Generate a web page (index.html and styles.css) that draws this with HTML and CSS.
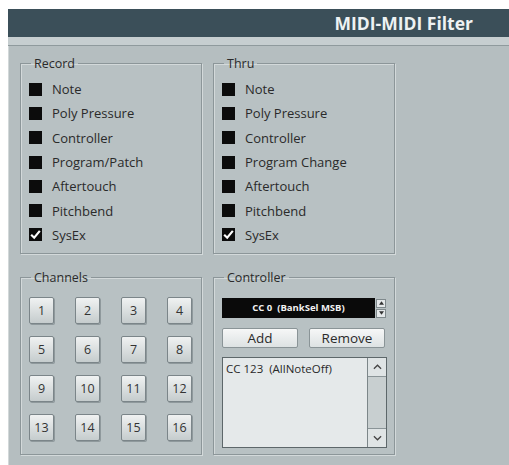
FILE: index.html
```html
<!DOCTYPE html>
<html lang="en">
<head>
  <meta charset="UTF-8">
  <title>MIDI-MIDI Filter</title>
  <link rel="stylesheet" href="styles.css">
</head>
<body>
  <div class="window">
    <div class="titlebar">MIDI-MIDI Filter</div>
    <div class="strip"></div>

    <div class="groups">
      <!-- Record filter -->
      <fieldset class="group">
        <legend>Record</legend>
        <div class="check-list">
          <div class="check-row"><span class="box"></span>Note</div>
          <div class="check-row"><span class="box"></span>Poly Pressure</div>
          <div class="check-row"><span class="box"></span>Controller</div>
          <div class="check-row"><span class="box"></span>Program/Patch</div>
          <div class="check-row"><span class="box"></span>Aftertouch</div>
          <div class="check-row"><span class="box"></span>Pitchbend</div>
          <div class="check-row"><span class="box checked"><svg viewBox="0 0 12 12"><path d="M2 6.2 L4.8 9 L10 2.6" fill="none" stroke="#fff" stroke-width="2"/></svg></span>SysEx</div>
        </div>
      </fieldset>

      <!-- Thru filter -->
      <fieldset class="group">
        <legend>Thru</legend>
        <div class="check-list">
          <div class="check-row"><span class="box"></span>Note</div>
          <div class="check-row"><span class="box"></span>Poly Pressure</div>
          <div class="check-row"><span class="box"></span>Controller</div>
          <div class="check-row"><span class="box"></span>Program Change</div>
          <div class="check-row"><span class="box"></span>Aftertouch</div>
          <div class="check-row"><span class="box"></span>Pitchbend</div>
          <div class="check-row"><span class="box checked"><svg viewBox="0 0 12 12"><path d="M2 6.2 L4.8 9 L10 2.6" fill="none" stroke="#fff" stroke-width="2"/></svg></span>SysEx</div>
        </div>
      </fieldset>

      <!-- Channels -->
      <fieldset class="group">
        <legend>Channels</legend>
        <div class="channels">
          <button class="chan">1</button>
          <button class="chan">2</button>
          <button class="chan">3</button>
          <button class="chan">4</button>
          <button class="chan">5</button>
          <button class="chan">6</button>
          <button class="chan">7</button>
          <button class="chan">8</button>
          <button class="chan">9</button>
          <button class="chan">10</button>
          <button class="chan">11</button>
          <button class="chan">12</button>
          <button class="chan">13</button>
          <button class="chan">14</button>
          <button class="chan">15</button>
          <button class="chan">16</button>
        </div>
      </fieldset>

      <!-- Controller -->
      <fieldset class="group">
        <legend>Controller</legend>
        <div class="cc-select">
          <div class="cc-value">CC 0 &nbsp;(BankSel MSB)</div>
          <div class="spin">
            <span class="spin-btn"><svg viewBox="0 0 6 4"><path d="M0 4 L3 0 L6 4 Z" fill="#333"/></svg></span>
            <span class="spin-btn"><svg viewBox="0 0 6 4"><path d="M0 0 L3 4 L6 0 Z" fill="#333"/></svg></span>
          </div>
        </div>
        <div class="cc-actions">
          <button class="btn">Add</button>
          <button class="btn">Remove</button>
        </div>
        <div class="cc-list">
          <div class="cc-items">
            <div class="cc-item">CC 123 &nbsp;(AllNoteOff)</div>
          </div>
          <div class="scrollbar">
            <span class="scroll-btn"><svg viewBox="0 0 10 6"><path d="M1 5 L5 1 L9 5" fill="none" stroke="#444" stroke-width="1.4"/></svg></span>
            <span class="scroll-track"></span>
            <span class="scroll-btn"><svg viewBox="0 0 10 6"><path d="M1 1 L5 5 L9 1" fill="none" stroke="#444" stroke-width="1.4"/></svg></span>
          </div>
        </div>
      </fieldset>
    </div>
  </div>
</body>
</html>
```

FILE: styles.css
```css
/* General */
body {
  margin: 0;
  background-color: #ffffff;
  font-family: 'Open Sans', 'DejaVu Sans', sans-serif;
  color: #222;
}

.window {
  margin: 9px 0 0 8px;
  height: 456px;
  background-color: #b5bec0;
  box-shadow: inset 1px 0 0 #d2d8d9;
}

/* Title bar */
.titlebar {
  height: 28px;
  line-height: 28px;
  background-color: #3b4f59;
  color: #eef2f3;
  font-weight: bold;
  font-size: 17.5px;
  text-align: right;
  padding-right: 36px;
}

.strip {
  height: 8px;
  background-color: #c6ced0;
  border-bottom: 1px solid #8f9a9d;
}

/* Group boxes */
.groups {
  display: grid;
  grid-template-columns: 182px 182px;
  grid-template-rows: 199px 186px;
  column-gap: 11px;
  row-gap: 15px;
  padding: 9px 0 0 12px;
}

.group {
  margin: 0;
  padding: 0 0 0 8px;
  border: 1px solid #8c9699;
  box-shadow: inset 1px 1px 0 #d3d9da, 1px 1px 0 #d3d9da;
  background-color: #b8c1c3;
  min-width: 0;
}

.group legend {
  font-size: 12.5px;
  padding: 0 3px;
  margin-left: 2px;
  color: #2a2a2a;
}

/* Checkbox rows */
.check-list {
  display: flex;
  flex-direction: column;
  padding-top: 5px;
}

.check-row {
  display: flex;
  align-items: center;
  height: 24.3px;
  font-size: 13px;
  color: #2a2a2a;
}

.box {
  width: 13px;
  height: 13px;
  background-color: #0c0c0c;
  margin-right: 10px;
  flex-shrink: 0;
}

.box svg {
  display: block;
  width: 13px;
  height: 13px;
}

/* Channel buttons */
.channels {
  display: grid;
  grid-template-columns: repeat(4, 25px);
  column-gap: 21px;
  row-gap: 12px;
  padding-top: 11px;
}

.chan {
  width: 25px;
  height: 27px;
  padding: 0;
  border: 1px solid #7b8589;
  border-radius: 2px;
  background: linear-gradient(#f0f2f2, #c5cccd);
  box-shadow: 1px 1px 0 #8f999c;
  font-family: 'Open Sans', sans-serif;
  font-size: 12.5px;
  color: #333;
}

/* Controller */
.cc-select {
  display: flex;
  align-items: center;
  margin-top: 12px;
}

.cc-value {
  width: 153px;
  height: 20px;
  line-height: 20px;
  background-color: #0a0a0a;
  color: #f2f2f2;
  font-size: 9.5px;
  font-weight: bold;
  text-align: center;
}

.spin {
  display: flex;
  flex-direction: column;
  gap: 1px;
  margin-left: 1px;
}

.spin-btn {
  width: 10px;
  height: 9px;
  background-color: #e4e8e9;
  border: 1px solid #7f898c;
  box-sizing: border-box;
  display: flex;
  align-items: center;
  justify-content: center;
}

.spin-btn svg {
  width: 5px;
  height: 4px;
}

.cc-actions {
  display: flex;
  justify-content: space-between;
  width: 163px;
  margin-top: 10px;
}

.btn {
  width: 76px;
  height: 20px;
  padding: 0;
  border: 1px solid #8a9497;
  border-radius: 2px;
  background: linear-gradient(#f6f7f7, #dde2e3);
  font-family: 'Open Sans', sans-serif;
  font-size: 13.5px;
  line-height: 18px;
  color: #2a2a2a;
}

.cc-list {
  display: flex;
  width: 165px;
  height: 91px;
  margin-top: 9px;
  border: 1px solid #5d676a;
  box-sizing: border-box;
  background-color: #e5e9ea;
}

.cc-items {
  flex: 1;
  padding: 3px 3px;
}

.cc-item {
  font-size: 11.5px;
  color: #2a2a2a;
}

.scrollbar {
  width: 18px;
  display: flex;
  flex-direction: column;
  border-left: 1px solid #7c8689;
  background-color: #c8cfd0;
}

.scroll-btn {
  height: 18px;
  display: flex;
  align-items: center;
  justify-content: center;
  background-color: #dfe4e5;
  border-bottom: 1px solid #8a9497;
}

.scroll-btn:last-child {
  border-bottom: none;
  border-top: 1px solid #8a9497;
}

.scroll-btn svg {
  width: 9px;
  height: 6px;
}

.scroll-track {
  flex: 1;
}
```
